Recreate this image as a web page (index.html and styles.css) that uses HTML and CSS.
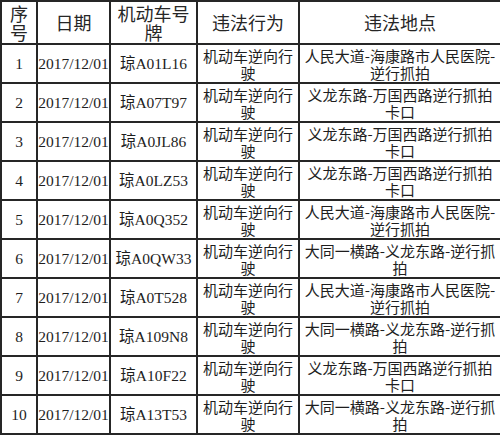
FILE: index.html
```html
<!DOCTYPE html>
<html lang="zh-CN">
<head>
<meta charset="utf-8">
<title>违法记录</title>
<link rel="stylesheet" href="styles.css">
</head>
<body>
<table class="records">
  <colgroup>
    <col class="c-no">
    <col class="c-date">
    <col class="c-plate">
    <col class="c-act">
    <col class="c-place">
  </colgroup>
  <thead>
    <tr class="head-row">
      <th>序号</th>
      <th>日期</th>
      <th>机动车号牌</th>
      <th>违法行为</th>
      <th>违法地点</th>
    </tr>
  </thead>
  <tbody>
    <tr><td class="num">1</td><td class="num">2017/12/01</td><td class="num">琼A01L16</td><td class="cn">机动车逆向行驶</td><td class="cn">人民大道-海康路市人民医院-逆行抓拍</td></tr>
    <tr><td class="num">2</td><td class="num">2017/12/01</td><td class="num">琼A07T97</td><td class="cn">机动车逆向行驶</td><td class="cn">义龙东路-万国西路逆行抓拍卡口</td></tr>
    <tr><td class="num">3</td><td class="num">2017/12/01</td><td class="num">琼A0JL86</td><td class="cn">机动车逆向行驶</td><td class="cn">义龙东路-万国西路逆行抓拍卡口</td></tr>
    <tr><td class="num">4</td><td class="num">2017/12/01</td><td class="num">琼A0LZ53</td><td class="cn">机动车逆向行驶</td><td class="cn">义龙东路-万国西路逆行抓拍卡口</td></tr>
    <tr><td class="num">5</td><td class="num">2017/12/01</td><td class="num">琼A0Q352</td><td class="cn">机动车逆向行驶</td><td class="cn">人民大道-海康路市人民医院-逆行抓拍</td></tr>
    <tr><td class="num">6</td><td class="num">2017/12/01</td><td class="num">琼A0QW33</td><td class="cn">机动车逆向行驶</td><td class="cn">大同一横路-义龙东路-逆行抓拍</td></tr>
    <tr><td class="num">7</td><td class="num">2017/12/01</td><td class="num">琼A0T528</td><td class="cn">机动车逆向行驶</td><td class="cn">人民大道-海康路市人民医院-逆行抓拍</td></tr>
    <tr><td class="num">8</td><td class="num">2017/12/01</td><td class="num">琼A109N8</td><td class="cn">机动车逆向行驶</td><td class="cn">大同一横路-义龙东路-逆行抓拍</td></tr>
    <tr><td class="num">9</td><td class="num">2017/12/01</td><td class="num">琼A10F22</td><td class="cn">机动车逆向行驶</td><td class="cn">义龙东路-万国西路逆行抓拍卡口</td></tr>
    <tr><td class="num">10</td><td class="num">2017/12/01</td><td class="num">琼A13T53</td><td class="cn">机动车逆向行驶</td><td class="cn">大同一横路-义龙东路-逆行抓拍</td></tr>
  </tbody>
</table>
</body>
</html>
```

FILE: styles.css
```css
html, body {
  margin: 0;
  padding: 0;
  background: #ffffff;
}

.records {
  width: 500px;
  table-layout: fixed;
  border-collapse: collapse;
  color: #1e1e1e;
}

.c-no { width: 36px; }
.c-date { width: 73px; }
.c-plate { width: 87px; }
.c-act { width: 102px; }
.c-place { width: 202px; }

.records th,
.records td {
  border: 2px solid #262626;
  text-align: center;
  vertical-align: middle;
  padding: 0 2px;
  overflow: hidden;
}

.head-row {
  height: 43px;
}

.records th {
  font-family: "Noto Sans CJK SC", "Noto Sans", sans-serif;
  font-weight: normal;
  font-size: 18px;
  line-height: 19px;
  color: #262626;
}

.records tbody tr {
  height: 39px;
}

.records td.num {
  font-family: "Liberation Serif", "Noto Sans CJK SC", serif;
  font-size: 15.5px;
  line-height: 17px;
  padding: 0;
  white-space: nowrap;
}

.records td.cn {
  font-family: "Noto Sans CJK SC", "Noto Sans", sans-serif;
  font-size: 15px;
  line-height: 17px;
}
```
